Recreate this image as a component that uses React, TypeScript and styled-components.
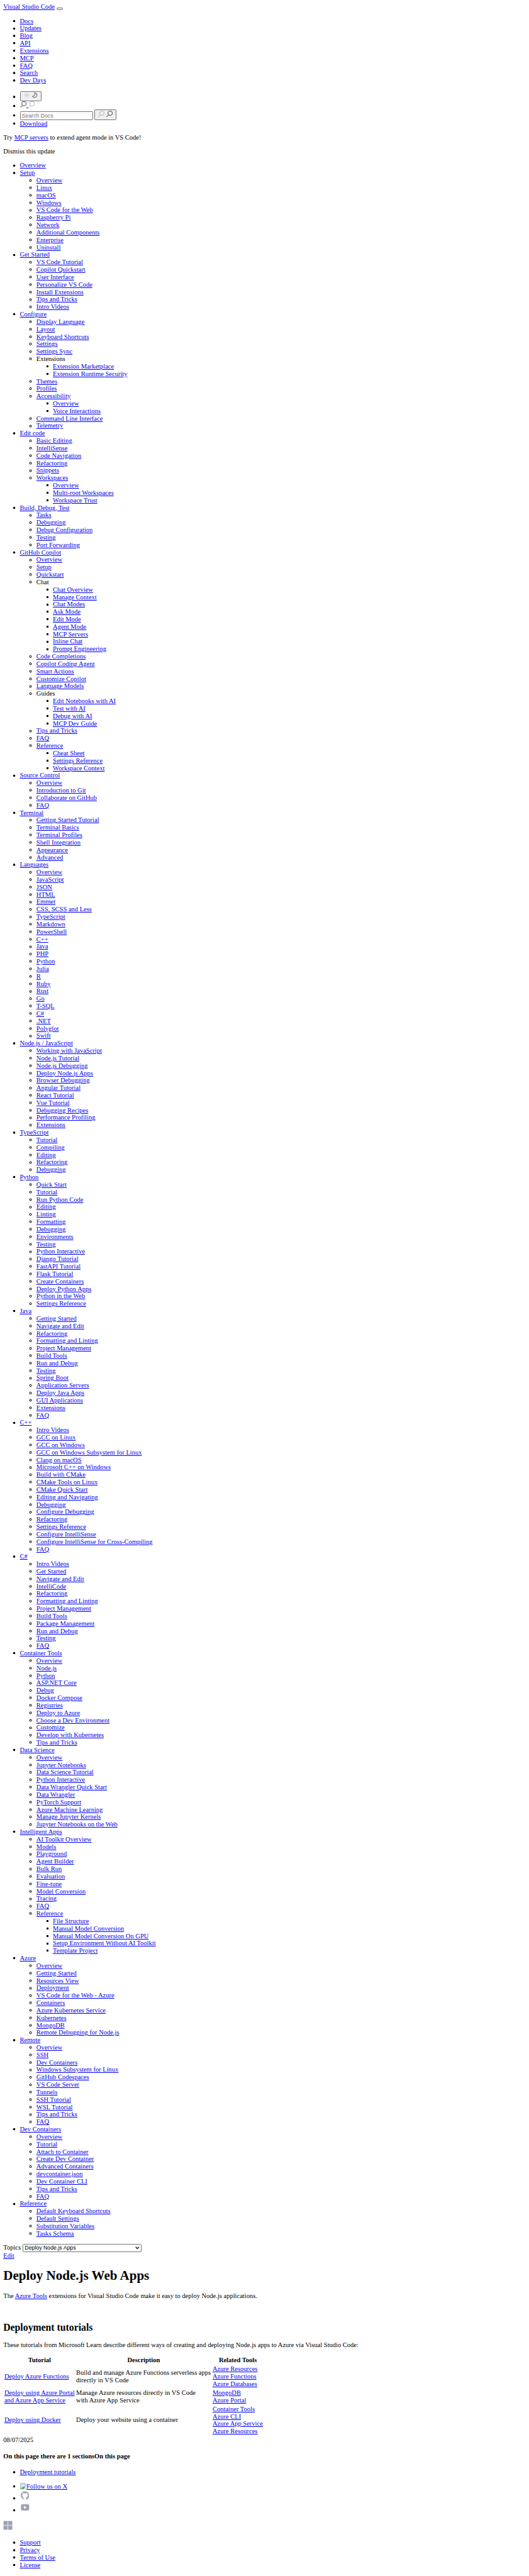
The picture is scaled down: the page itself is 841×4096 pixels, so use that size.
import React from "react";
import styled, { createGlobalStyle } from "styled-components";
import { SiGithub } from "react-icons/si";

/* 1rem is the body text size; every other length is a multiple of it. */
const GlobalStyle = createGlobalStyle`
  html {
    font-size: 10.5128px;
    background: #fff;
  }
  body {
    margin: 0;
    font-family: "Liberation Serif", "Times New Roman", serif;
    font-size: 1rem;
    line-height: 1.125rem;
    color: #000;
  }
`;

const Page = styled.div`
  box-sizing: border-box;
  width: 100%;
  padding: 0.5rem 0.5rem 1rem;
  overflow: hidden;
  white-space: nowrap;
`;

const Link = styled.a`
  color: #0000ee;
  text-decoration: underline;
  cursor: pointer;
`;

const Brand = styled.div`
  display: flex;
  align-items: flex-start;
  gap: 0.25rem;
  height: 1.125rem;
`;

const MenuToggle = styled.button`
  box-sizing: border-box;
  width: 1rem;
  height: 0.375rem;
  margin: 0.6875rem 0 0;
  padding: 0;
  border: 1px solid #767676;
  border-radius: 0.1875rem;
  background: #efefef;
`;

/* Bullets by nesting depth: disc, ring, square. */
const bullets = [
  "radial-gradient(circle, #000 1.3px, transparent 2.2px)",
  "radial-gradient(circle, transparent 0.6px, #222 1.3px, #222 1.6px, transparent 2.4px)",
  "linear-gradient(#000, #000) center / 3px 3px no-repeat",
];

const List = styled.ul<{ $level?: number }>`
  --bullet: ${({ $level = 0 }) => bullets[$level]};
  margin: ${({ $level = 0 }) => ($level === 0 ? "1rem 0" : "0")};
  padding: 0 0 0 2.5rem;
  list-style: none;
`;

const Item = styled.li`
  &::before {
    content: "";
    display: inline-block;
    width: 0.5rem;
    height: 0.5rem;
    margin: 0 0.606rem 0 -1.106rem;
    vertical-align: 0.06rem;
    background: var(--bullet);
  }
`;

const IconItem = styled.li<{ $height: number; $bulletTop: number }>`
  display: flex;
  align-items: flex-start;
  gap: 0.25rem;
  height: ${({ $height }) => $height}rem;
  &::before {
    content: "";
    flex: none;
    width: 0.5rem;
    height: 0.5rem;
    margin: ${({ $bulletTop }) => $bulletTop}rem 0.356rem 0 -1.106rem;
    background: var(--bullet);
  }
`;

const IconButton = styled.button`
  box-sizing: border-box;
  display: flex;
  align-items: flex-start;
  gap: 0.25rem;
  width: 3.25rem;
  height: 1.5625rem;
  margin: 0;
  padding: calc(0.1875rem - 1px) 0 0 calc(0.5rem - 1px);
  border: 1px solid #767676;
  border-radius: 0.1875rem;
  background: #efefef;
`;

const SearchInput = styled.input`
  box-sizing: border-box;
  width: 11.0625rem;
  height: 1.3125rem;
  margin: 0.25rem 0 0;
  padding: 0 0 0 calc(0.25rem - 1px + 0.03rem);
  border: 1px solid #767676;
  border-radius: 0.125rem;
  background: #fff;
  font-family: "Liberation Sans", Arial, sans-serif;
  font-size: 0.8333rem;
  &::placeholder {
    color: #757575;
    opacity: 1;
  }
`;

const IconLink = styled.a`
  display: flex;
  align-items: flex-start;
  height: 1.0625rem;
`;

const LinkGap = styled.span`
  align-self: flex-end;
  width: 0.25rem;
  border-bottom: 1px solid #0000ee;
`;

const Glyph = styled.svg<{ $size?: number }>`
  display: block;
  flex: none;
  width: ${({ $size = 1 }) => $size}rem;
  height: ${({ $size = 1 }) => $size}rem;
`;

const Paragraph = styled.p`
  margin: 1rem 0;
`;

const TopicBar = styled.div`
  display: flex;
  align-items: center;
  gap: 0.25rem;
  height: 1.1875rem;
`;

const TopicSelect = styled.button`
  box-sizing: border-box;
  display: flex;
  align-items: center;
  justify-content: space-between;
  width: 18.03rem;
  height: 1.1875rem;
  padding: 0 0.22rem 0 0.25rem;
  border: 1px solid #767676;
  border-radius: 0.125rem;
  background: #fff;
  color: #000;
  font-family: "Liberation Sans", Arial, sans-serif;
  font-size: 0.8333rem;
  line-height: 1;
`;

const Title = styled.h1`
  margin: 1.34rem 0;
  font-size: 2rem;
  line-height: 2.3125rem;
`;

const Subtitle = styled.h2`
  margin: 3.37rem 0 1.245rem;
  font-size: 1.5rem;
  line-height: 1.6875rem;
`;

const SectionLabel = styled.h4`
  margin: 1.33rem 0;
  font-size: 1rem;
`;

const Table = styled.table`
  border-collapse: separate;
  border-spacing: 0.125rem;
  table-layout: fixed;
  width: 39.4375rem;
  font-size: 1rem;
`;

const HeadCell = styled.th<{ $width: number }>`
  box-sizing: border-box;
  width: ${({ $width }) => $width}rem;
  padding: 0.0625rem;
  text-align: center;
`;

const Cell = styled.td`
  padding: 0.0625rem;
  vertical-align: middle;
`;

const SocialLink = styled.a`
  display: flex;
  align-items: center;
  justify-content: center;
  width: 1.5rem;
  height: 1.5rem;
  color: #9ea4b6;
`;

const MissingImage = styled.span`
  display: inline-block;
  width: 1rem;
  height: 1rem;
  vertical-align: -0.11rem;
`;

const Platform = styled.div`
  height: 1.75rem;
`;

type Entry = string | { title: string; plain?: boolean; items: Entry[] };

const siteLinks = ["Docs", "Updates", "Blog", "API", "Extensions", "MCP", "FAQ", "Search", "Dev Days"];

const docs: Entry[] = [
  "Overview",
  {
    title: "Setup",
    items: ["Overview", "Linux", "macOS", "Windows", "VS Code for the Web", "Raspberry Pi", "Network", "Additional Components", "Enterprise", "Uninstall"],
  },
  {
    title: "Get Started",
    items: ["VS Code Tutorial", "Copilot Quickstart", "User Interface", "Personalize VS Code", "Install Extensions", "Tips and Tricks", "Intro Videos"],
  },
  {
    title: "Configure",
    items: [
      "Display Language", "Layout", "Keyboard Shortcuts", "Settings", "Settings Sync",
      { title: "Extensions", plain: true, items: ["Extension Marketplace", "Extension Runtime Security"] },
      "Themes", "Profiles",
      { title: "Accessibility", items: ["Overview", "Voice Interactions"] },
      "Command Line Interface", "Telemetry",
    ],
  },
  {
    title: "Edit code",
    items: [
      "Basic Editing", "IntelliSense", "Code Navigation", "Refactoring", "Snippets",
      { title: "Workspaces", items: ["Overview", "Multi-root Workspaces", "Workspace Trust"] },
    ],
  },
  { title: "Build, Debug, Test", items: ["Tasks", "Debugging", "Debug Configuration", "Testing", "Port Forwarding"] },
  {
    title: "GitHub Copilot",
    items: [
      "Overview", "Setup", "Quickstart",
      {
        title: "Chat",
        plain: true,
        items: ["Chat Overview", "Manage Context", "Chat Modes", "Ask Mode", "Edit Mode", "Agent Mode", "MCP Servers", "Inline Chat", "Prompt Engineering"],
      },
      "Code Completions", "Copilot Coding Agent", "Smart Actions", "Customize Copilot", "Language Models",
      { title: "Guides", plain: true, items: ["Edit Notebooks with AI", "Test with AI", "Debug with AI", "MCP Dev Guide"] },
      "Tips and Tricks", "FAQ",
      { title: "Reference", items: ["Cheat Sheet", "Settings Reference", "Workspace Context"] },
    ],
  },
  { title: "Source Control", items: ["Overview", "Introduction to Git", "Collaborate on GitHub", "FAQ"] },
  {
    title: "Terminal",
    items: ["Getting Started Tutorial", "Terminal Basics", "Terminal Profiles", "Shell Integration", "Appearance", "Advanced"],
  },
  {
    title: "Languages",
    items: [
      "Overview", "JavaScript", "JSON", "HTML", "Emmet", "CSS, SCSS and Less", "TypeScript", "Markdown", "PowerShell", "C++", "Java",
      "PHP", "Python", "Julia", "R", "Ruby", "Rust", "Go", "T-SQL", "C#", ".NET", "Polyglot", "Swift",
    ],
  },
  {
    title: "Node.js / JavaScript",
    items: [
      "Working with JavaScript", "Node.js Tutorial", "Node.js Debugging", "Deploy Node.js Apps", "Browser Debugging",
      "Angular Tutorial", "React Tutorial", "Vue Tutorial", "Debugging Recipes", "Performance Profiling", "Extensions",
    ],
  },
  { title: "TypeScript", items: ["Tutorial", "Compiling", "Editing", "Refactoring", "Debugging"] },
  {
    title: "Python",
    items: [
      "Quick Start", "Tutorial", "Run Python Code", "Editing", "Linting", "Formatting", "Debugging", "Environments", "Testing",
      "Python Interactive", "Django Tutorial", "FastAPI Tutorial", "Flask Tutorial", "Create Containers", "Deploy Python Apps",
      "Python in the Web", "Settings Reference",
    ],
  },
  {
    title: "Java",
    items: [
      "Getting Started", "Navigate and Edit", "Refactoring", "Formatting and Linting", "Project Management", "Build Tools",
      "Run and Debug", "Testing", "Spring Boot", "Application Servers", "Deploy Java Apps", "GUI Applications", "Extensions", "FAQ",
    ],
  },
  {
    title: "C++",
    items: [
      "Intro Videos", "GCC on Linux", "GCC on Windows", "GCC on Windows Subsystem for Linux", "Clang on macOS",
      "Microsoft C++ on Windows", "Build with CMake", "CMake Tools on Linux", "CMake Quick Start", "Editing and Navigating",
      "Debugging", "Configure Debugging", "Refactoring", "Settings Reference", "Configure IntelliSense",
      "Configure IntelliSense for Cross-Compiling", "FAQ",
    ],
  },
  {
    title: "C#",
    items: [
      "Intro Videos", "Get Started", "Navigate and Edit", "IntelliCode", "Refactoring", "Formatting and Linting",
      "Project Management", "Build Tools", "Package Management", "Run and Debug", "Testing", "FAQ",
    ],
  },
  {
    title: "Container Tools",
    items: [
      "Overview", "Node.js", "Python", "ASP.NET Core", "Debug", "Docker Compose", "Registries", "Deploy to Azure",
      "Choose a Dev Environment", "Customize", "Develop with Kubernetes", "Tips and Tricks",
    ],
  },
  {
    title: "Data Science",
    items: [
      "Overview", "Jupyter Notebooks", "Data Science Tutorial", "Python Interactive", "Data Wrangler Quick Start",
      "Data Wrangler", "PyTorch Support", "Azure Machine Learning", "Manage Jupyter Kernels", "Jupyter Notebooks on the Web",
    ],
  },
  {
    title: "Intelligent Apps",
    items: [
      "AI Toolkit Overview", "Models", "Playground", "Agent Builder", "Bulk Run", "Evaluation", "Fine-tune", "Model Conversion",
      "Tracing", "FAQ",
      {
        title: "Reference",
        items: ["File Structure", "Manual Model Conversion", "Manual Model Conversion On GPU", "Setup Environment Without AI Toolkit", "Template Project"],
      },
    ],
  },
  {
    title: "Azure",
    items: [
      "Overview", "Getting Started", "Resources View", "Deployment", "VS Code for the Web - Azure", "Containers",
      "Azure Kubernetes Service", "Kubernetes", "MongoDB", "Remote Debugging for Node.js",
    ],
  },
  {
    title: "Remote",
    items: [
      "Overview", "SSH", "Dev Containers", "Windows Subsystem for Linux", "GitHub Codespaces", "VS Code Server", "Tunnels",
      "SSH Tutorial", "WSL Tutorial", "Tips and Tricks", "FAQ",
    ],
  },
  {
    title: "Dev Containers",
    items: [
      "Overview", "Tutorial", "Attach to Container", "Create Dev Container", "Advanced Containers", "devcontainer.json",
      "Dev Container CLI", "Tips and Tricks", "FAQ",
    ],
  },
  { title: "Reference", items: ["Default Keyboard Shortcuts", "Default Settings", "Substitution Variables", "Tasks Schema"] },
];

const tutorials = [
  {
    link: ["Deploy Azure Functions"],
    description: ["Build and manage Azure Functions serverless apps", "directly in VS Code"],
    tools: ["Azure Resources", "Azure Functions", "Azure Databases"],
  },
  {
    link: ["Deploy using Azure Portal", "and Azure App Service"],
    description: ["Manage Azure resources directly in VS Code", "with Azure App Service"],
    tools: ["MongoDB", "Azure Portal"],
  },
  {
    link: ["Deploy using Docker"],
    description: ["Deploy your website using a container"],
    tools: ["Container Tools", "Azure CLI", "Azure App Service", "Azure Resources"],
  },
];

const footerLinks = ["Support", "Privacy", "Terms of Use", "License"];

const DARK = "#2b2b2b";
const LIGHT = "#a3a9bc";

function Tree({ entries, level = 0 }: { entries: Entry[]; level?: number }) {
  return (
    <List $level={level}>
      {entries.map((entry, i) =>
        typeof entry === "string" ? (
          <Item key={i}>
            <Link>{entry}</Link>
          </Item>
        ) : (
          <Item key={i}>
            {entry.plain ? entry.title : <Link>{entry.title}</Link>}
            <Tree entries={entry.items} level={level + 1} />
          </Item>
        )
      )}
    </List>
  );
}

function Lines({ lines }: { lines: string[] }) {
  return (
    <>
      {lines.map((line, i) => (
        <React.Fragment key={line}>
          {i > 0 && <br />}
          {line}
        </React.Fragment>
      ))}
    </>
  );
}

function SearchIcon({ color }: { color: string }) {
  return (
    <Glyph viewBox="0 0 16 16" fill="none" stroke={color} strokeWidth="1.3">
      <circle cx="9.3" cy="6.1" r="5.4" />
      <path d="M5.6 9.9 0.5 15.4" strokeWidth="1.5" />
    </Glyph>
  );
}

function SunIcon() {
  return (
    <Glyph viewBox="0 0 16 16" fill="none" stroke={LIGHT} strokeWidth="1.1">
      <circle cx="8" cy="8" r="2.9" />
      <path d="M8 1v1.4M8 13.6V15M1 8h1.4M13.6 8H15M3 3l1 1M12 12l1 1M3 13l1-1M12 4l1-1" />
    </Glyph>
  );
}

function MoonIcon() {
  return (
    <Glyph viewBox="0 0 16 16" fill="none" stroke={DARK} strokeWidth="1.3" strokeLinejoin="round">
      <path d="M7.4 2.3c3.600.3 5.600 2.900 5.600 5.700 0 3.200-2.500 5.700-5.700 5.700-2.200 0-3.900-1.100-4.900-2.700 3-.6 5-2.200 5.500-4.300.4-1.600.2-3.100-.5-4.400z" />
    </Glyph>
  );
}

function BrokenImageIcon() {
  return (
    <Glyph viewBox="0 0 16 16">
      <path d="M.5.500h10.500l4.500 4.500v10.500H.5z" fill="#c6dbf7" stroke="#a3a3a3" />
      <path d="M11 .5V5h4.500" fill="#fff" stroke="#a3a3a3" />
      <path d="M3 6.500c0-1 .8-1.500 1.600-1.300.5-1.200 2.400-1 2.600.3.900 0 1.300 1 .6 1.500H3.500z" fill="#fff" />
      <path d="M1 15c2-3.300 5-5.500 8.500-6L13 11 9 15z" fill="#57ab3a" />
      <path d="M16 7.500 8 16h2.500L16 10.500z" fill="#fff" />
    </Glyph>
  );
}

function YouTubeIcon() {
  return (
    <Glyph $size={1.5} viewBox="0 0 24 24" fill="#9ea4b6">
      <path d="M2 7.500A3 3 0 0 1 4.800 4.400c4.500-.4 9.900-.4 14.400 0A3 3 0 0 1 22 7.500v8.800a3 3 0 0 1-2.800 3.100c-4.500.4-9.900.4-14.400 0A3 3 0 0 1 2 16.300z" />
      <path d="M9.300 8.300v7.400l6.200-3.700z" fill="#fff" />
    </Glyph>
  );
}

function PlatformIcon() {
  return (
    <Glyph $size={1.5} viewBox="0 0 24 24">
      <path d="M1 .400h21v22H1z" fill="#ced2dc" />
      <path d="M1 1h10v9.400H1zM12 1h10v9.400H12zM1 12.400h10v9.300H1zM12 12.400h10v9.300H12z" fill="#9ea4b6" />
      <path d="M11 .400h1v22h-1z" fill="#fff" />
    </Glyph>
  );
}

export default function App() {
  return (
    <Page>
      <GlobalStyle />
      <Brand>
        <Link>Visual Studio Code</Link>
        <MenuToggle aria-label="Toggle navigation" />
      </Brand>

      <List>
        {siteLinks.map((label) => (
          <Item key={label}>
            <Link>{label}</Link>
          </Item>
        ))}
      </List>

      <List>
        <IconItem $height={1.5625} $bulletTop={0.656}>
          <IconButton aria-label="Switch theme">
            <SunIcon />
            <MoonIcon />
          </IconButton>
        </IconItem>
        <IconItem $height={1.25} $bulletTop={0.45}>
          <IconLink aria-label="Search">
            <SearchIcon color={DARK} />
            <LinkGap />
            <SearchIcon color={LIGHT} />
          </IconLink>
        </IconItem>
        <IconItem $height={1.5625} $bulletTop={0.66}>
          <SearchInput placeholder="Search Docs" />
          <IconButton aria-label="Search docs">
            <SearchIcon color={LIGHT} />
            <SearchIcon color={DARK} />
          </IconButton>
        </IconItem>
        <Item>
          <Link>Download</Link>
        </Item>
      </List>

      <Paragraph>
        Try <Link>MCP servers</Link> to extend agent mode in VS Code!
      </Paragraph>
      <Paragraph>Dismiss this update</Paragraph>

      <Tree entries={docs} />

      <TopicBar>
        <span>Topics</span>
        <TopicSelect>
          <span>Deploy Node.js Apps</span>
          <Glyph $size={0.625} viewBox="0 0 10 10" fill="none" stroke="#000" strokeWidth="2">
            <path d="M1 2.500 5 7l4-4.500" />
          </Glyph>
        </TopicSelect>
      </TopicBar>
      <div>
        <Link>Edit</Link>
      </div>

      <Title>Deploy Node.js Web Apps</Title>
      <Paragraph>
        The <Link>Azure Tools</Link> extensions for Visual Studio Code make it easy to deploy Node.js applications.
      </Paragraph>

      <Subtitle>Deployment tutorials</Subtitle>
      <Paragraph>
        These tutorials from Microsoft Learn describe different ways of creating and deploying Node.js apps to Azure via
        Visual Studio Code:
      </Paragraph>
      <Table>
        <thead>
          <tr>
            <HeadCell $width={10.76}>Tutorial</HeadCell>
            <HeadCell $width={20.53}>Description</HeadCell>
            <HeadCell $width={7.75}>Related Tools</HeadCell>
          </tr>
        </thead>
        <tbody>
          {tutorials.map((row, i) => (
            <tr key={i}>
              <Cell>
                <Link>
                  <Lines lines={row.link} />
                </Link>
              </Cell>
              <Cell>
                <Lines lines={row.description} />
              </Cell>
              <Cell>
                {row.tools.map((tool) => (
                  <div key={tool}>
                    <Link>{tool}</Link>
                  </div>
                ))}
              </Cell>
            </tr>
          ))}
        </tbody>
      </Table>
      <div>08/07/2025</div>

      <SectionLabel>On this page there are 1 sectionsOn this page</SectionLabel>
      <List>
        <Item>
          <Link>Deployment tutorials</Link>
        </Item>
      </List>

      <List>
        <Item>
          <Link>
            <MissingImage>
              <BrokenImageIcon />
            </MissingImage>
            Follow us on X
          </Link>
        </Item>
        <IconItem $height={1.8125} $bulletTop={0.98}>
          <SocialLink aria-label="GitHub">
            <SiGithub size="1.3rem" />
          </SocialLink>
        </IconItem>
        <IconItem $height={1.8125} $bulletTop={0.98}>
          <SocialLink aria-label="YouTube">
            <YouTubeIcon />
          </SocialLink>
        </IconItem>
      </List>

      <Platform>
        <PlatformIcon />
      </Platform>

      <List>
        {footerLinks.map((label) => (
          <Item key={label}>
            <Link>{label}</Link>
          </Item>
        ))}
      </List>
    </Page>
  );
}
